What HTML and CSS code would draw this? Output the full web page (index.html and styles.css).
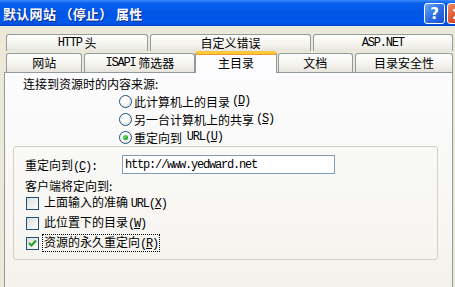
FILE: index.html
```html
<!DOCTYPE html>
<html lang="zh-CN">
<head>
  <meta charset="UTF-8">
  <title>默认网站 (停止) 属性</title>
  <link rel="stylesheet" href="styles.css">
</head>
<body>
  <div class="window">
    <div class="titlebar">
      <span class="title">默认网站 （停止） 属性</span>
      <div class="caption-buttons">
        <span class="cap-btn help">?</span>
        <span class="cap-btn close">
          <svg width="14" height="14" viewBox="0 0 14 14"><path d="M3 3 L11 11 M11 3 L3 11" stroke="#fff" stroke-width="2.2" stroke-linecap="round"/></svg>
        </span>
      </div>
    </div>

    <div class="dialog">
      <div class="tab-row back">
        <div class="tab w143"><span class="a">HTTP</span>&nbsp;头</div>
        <div class="tab w161">自定义错误</div>
        <div class="tab w141"><span class="a">ASP.NET</span></div>
      </div>
      <div class="tab-row front">
        <div class="tab w77">网站</div>
        <div class="tab w112"><span class="a">ISAPI</span>&nbsp;筛选器</div>
        <div class="tab w82 selected">主目录</div>
        <div class="tab w76">文档</div>
        <div class="tab w99">目录安全性</div>
      </div>

      <div class="panel">
        <div class="line label">连接到资源时的内容来源:</div>
        <div class="radios">
          <div class="line option"><span class="radio"></span>此计算机上的目录<span class="a">(<u>D</u>)</span></div>
          <div class="line option"><span class="radio"></span>另一台计算机上的共享<span class="a">(<u>S</u>)</span></div>
          <div class="line option"><span class="radio on"></span>重定向到&nbsp;<span class="a">URL(<u>U</u>)</span></div>
        </div>

        <div class="group">
          <div class="field">
            <span class="field-label">重定向到<span class="a">(<u>C</u>):</span></span>
            <div class="textbox"><span class="a">http://www.yedward.net</span></div>
          </div>
          <div class="line sub">客户端将定向到:</div>
          <div class="check-row"><span class="check"></span><span class="ctext">上面输入的准确&nbsp;<span class="a">URL(<u>X</u>)</span></span></div>
          <div class="check-row"><span class="check"></span><span class="ctext">此位置下的目录<span class="a">(<u>W</u>)</span></span></div>
          <div class="check-row"><span class="check on"><svg width="9" height="8" viewBox="0 0 9 8"><path d="M1 4 L3.5 6.5 L8 1.5" fill="none" stroke="#21a121" stroke-width="2"/></svg></span><span class="ctext focus">资源的永久重定向<span class="a">(<u>R</u>)</span></span></div>
        </div>
      </div>
    </div>
  </div>
</body>
</html>
```

FILE: styles.css
```css
body {
  margin: 0;
  width: 455px;
  height: 287px;
  overflow: hidden;
  font-family: "Noto Sans CJK SC", "DejaVu Sans", sans-serif;
  font-size: 12px;
  color: #000;
  background: #ece9d8;
}

.a {
  font-family: "Liberation Mono", monospace;
  letter-spacing: -1.2px;
}

u {
  text-decoration: underline;
  text-underline-offset: 1px;
}

.window {
  width: 455px;
  height: 287px;
  overflow: hidden;
}

/* title bar */
.titlebar {
  height: 26px;
  display: flex;
  align-items: center;
  justify-content: space-between;
  background: linear-gradient(to bottom, #3a8cf8 0%, #0a60ee 12%, #0055e5 50%, #0058ec 85%, #0047d0 100%);
  padding-left: 3px;
}

.title {
  color: #fff;
  font-weight: bold;
  font-size: 13px;
  letter-spacing: 0.3px;
  text-shadow: 1px 1px 0 #0b2a8a;
}

.caption-buttons {
  display: flex;
  gap: 2px;
  margin-right: -13px;
  padding-top: 1px;
}

.cap-btn {
  width: 19px;
  height: 19px;
  border: 1px solid #fff;
  border-radius: 3px;
  display: flex;
  align-items: center;
  justify-content: center;
  color: #fff;
  font-family: "DejaVu Sans", sans-serif;
  font-weight: bold;
  font-size: 15px;
}

.help {
  background: linear-gradient(135deg, #6aa6ff 0%, #2f6fe6 50%, #1d4fd0 100%);
}

.close {
  background: linear-gradient(135deg, #f0906a 0%, #e0522a 50%, #c43a16 100%);
}

/* dialog body */
.dialog {
  padding: 8px 0 0 4px;
}

.tab-row {
  display: flex;
  align-items: flex-end;
  margin-left: 2px;
}

.tab {
  height: 17px;
  box-sizing: border-box;
  border: 1px solid #919b9c;
  border-bottom: none;
  border-radius: 3px 3px 0 0;
  background: linear-gradient(to bottom, #fefefe, #f4f3ee 60%, #e6e4dc);
  display: flex;
  align-items: center;
  justify-content: center;
  margin-right: 2px;
  line-height: 14px;
}

.tab-row.front .tab {
  height: 19px;
}

.tab-row.front .tab.selected {
  height: 22px;
  margin: 0 1px -1px -2px;
  background: #fcfcfe;
  border-top: 3px solid #ffc83c;
  box-shadow: inset 0 1px 0 #e69b2c;
  position: relative;
  z-index: 1;
  padding-bottom: 1px;
}

.w143 { width: 143px; }
.w161 { width: 161px; }
.w141 { width: 141px; }
.w77 { width: 77px; }
.w112 { width: 112px; }
.w82 { width: 82px; }
.w76 { width: 76px; }
.w99 { width: 99px; }

.panel {
  width: 449px;
  height: 216px;
  box-sizing: border-box;
  border: 1px solid #919b9c;
  border-bottom: none;
  background: linear-gradient(to bottom, #fcfcfe, #f7f6f2 70%, #f3f2ec);
  padding: 1px 0 0 18px;
}

.line {
  height: 18px;
  display: flex;
  align-items: center;
  white-space: nowrap;
}

.radios {
  padding-left: 96px;
}

.option {
  gap: 2px;
}

.radio {
  width: 11px;
  height: 11px;
  border: 1px solid #1c5180;
  border-radius: 50%;
  background: radial-gradient(circle at 35% 35%, #fff 30%, #dcdcd7 100%);
  display: flex;
  align-items: center;
  justify-content: center;
  flex-shrink: 0;
}

.radio.on::after {
  content: "";
  width: 5px;
  height: 5px;
  border-radius: 50%;
  background: radial-gradient(circle at 35% 35%, #5be05b, #21a121 70%);
}

/* frame */
.group {
  width: 425px;
  height: 114px;
  box-sizing: border-box;
  margin-left: -10px;
  border: 1px solid #d0d0bf;
  border-radius: 3px;
  padding: 8px 0 0 11px;
}

.field {
  display: flex;
  align-items: center;
  height: 19px;
}

.field-label {
  width: 97px;
}

.textbox {
  width: 213px;
  height: 19px;
  box-sizing: border-box;
  border: 1px solid #7f9db9;
  background: #fff;
  display: flex;
  align-items: center;
  padding-left: 2px;
}

.sub {
  height: 16px;
  margin-top: 3px;
}

.check-row {
  height: 20px;
  display: flex;
  align-items: center;
  padding-left: 1px;
  gap: 3px;
}

.check {
  width: 11px;
  height: 11px;
  border: 1px solid #1c5180;
  background: linear-gradient(135deg, #dcdcd7, #fff);
  display: flex;
  align-items: center;
  justify-content: center;
  flex-shrink: 0;
}

.ctext {
  padding: 0 1px;
  border: 1px dotted transparent;
  line-height: 14px;
}

.ctext.focus {
  border-color: #000;
}
```
